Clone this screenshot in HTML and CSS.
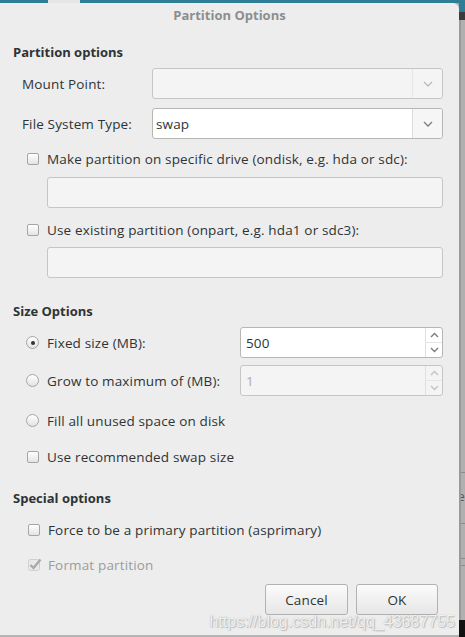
FILE: index.html
```html
<!DOCTYPE html>
<html>
<head>
<meta charset="utf-8">
<link rel="stylesheet" href="styles.css">
</head>
<body>
<div class="screen">
  <div class="main">
    <div class="topstrip"><div class="tab"></div></div>
    <div class="dialog">
      <div class="titlebar">Partition Options</div>
      <div class="content">
        <div class="heading h-first">Partition options</div>

        <div class="field-row r-mount">
          <span class="label">Mount Point:</span>
          <div class="combo disabled">
            <span class="combo-text"></span>
            <span class="combo-btn"><svg width="10" height="6" viewBox="0 0 10 6"><path d="M1 1 L5 5 L9 1" fill="none" stroke="currentColor" stroke-width="1.3"/></svg></span>
          </div>
        </div>

        <div class="field-row r-fs">
          <span class="label">File System Type:</span>
          <div class="combo">
            <span class="combo-text">swap</span>
            <span class="combo-btn"><svg width="10" height="6" viewBox="0 0 10 6"><path d="M1 1 L5 5 L9 1" fill="none" stroke="currentColor" stroke-width="1.3"/></svg></span>
          </div>
        </div>

        <div class="check-row r-c1">
          <span class="checkbox"></span>
          <span class="check-label">Make partition on specific drive (ondisk, e.g. hda or sdc):</span>
        </div>
        <div class="entry disabled r-e1"></div>

        <div class="check-row r-c2">
          <span class="checkbox"></span>
          <span class="check-label">Use existing partition (onpart, e.g. hda1 or sdc3):</span>
        </div>
        <div class="entry disabled r-e2"></div>

        <div class="heading h-size">Size Options</div>

        <div class="field-row r-s1">
          <span class="radio checked"></span>
          <span class="radio-label">Fixed size (MB):</span>
          <div class="spin">
            <span class="spin-text">500</span>
            <span class="spin-btns">
              <span class="spin-btn"><svg width="9" height="6" viewBox="0 0 9 6"><path d="M1 5 L4.5 1.5 L8 5" fill="none" stroke="currentColor" stroke-width="1.4"/></svg></span>
              <span class="spin-btn"><svg width="9" height="6" viewBox="0 0 9 6"><path d="M1 1 L4.5 4.5 L8 1" fill="none" stroke="currentColor" stroke-width="1.4"/></svg></span>
            </span>
          </div>
        </div>

        <div class="field-row r-s2">
          <span class="radio"></span>
          <span class="radio-label">Grow to maximum of (MB):</span>
          <div class="spin disabled">
            <span class="spin-text">1</span>
            <span class="spin-btns">
              <span class="spin-btn"><svg width="9" height="6" viewBox="0 0 9 6"><path d="M1 5 L4.5 1.5 L8 5" fill="none" stroke="currentColor" stroke-width="1.4"/></svg></span>
              <span class="spin-btn"><svg width="9" height="6" viewBox="0 0 9 6"><path d="M1 1 L4.5 4.5 L8 1" fill="none" stroke="currentColor" stroke-width="1.4"/></svg></span>
            </span>
          </div>
        </div>

        <div class="check-row r-s3">
          <span class="radio"></span>
          <span class="check-label">Fill all unused space on disk</span>
        </div>

        <div class="check-row r-s4">
          <span class="checkbox"></span>
          <span class="check-label">Use recommended swap size</span>
        </div>

        <div class="heading h-special">Special options</div>

        <div class="check-row special r-p1">
          <span class="checkbox"></span>
          <span class="check-label">Force to be a primary partition (asprimary)</span>
        </div>

        <div class="check-row special insensitive r-p2">
          <span class="checkmark"><svg width="14" height="13" viewBox="0 0 14 13"><rect x="0.5" y="1.5" width="11" height="11" rx="2" fill="#eaeaea" stroke="#cfcfcf"/><path d="M2.5 7 L5.5 10 L12.5 1.5" fill="none" stroke="currentColor" stroke-width="2.4"/></svg></span>
          <span class="check-label">Format partition</span>
        </div>

        <div class="buttons">
          <button class="btn">Cancel</button>
          <button class="btn">OK</button>
        </div>
      </div>
      <div class="watermark">https://blog.csdn.net/qq_43687755</div>
    </div>
    <div class="bottomline"></div>
  </div>
  <div class="side">
    <div class="side-teal"></div>
    <div class="side-dark"></div>
    <div class="side-gray">
      <div class="side-line l1"></div>
      <div class="side-e">e</div>
      <div class="side-line l2"></div>
      <div class="side-line l3"></div>
      <div class="side-line l4"></div>
    </div>
    <div class="side-black"></div>
  </div>
</div>
</body>
</html>
```
FILE: styles.css
```css
html, body {
  margin: 0;
  padding: 0;
}
body {
  width: 465px;
  height: 637px;
  overflow: hidden;
  background: #a9a9a9;
  font-family: "Open Sans", "DejaVu Sans", sans-serif;
  font-size: 13.5px;
  letter-spacing: 0.15px;
  color: #2e3436;
}
.screen {
  display: flex;
  width: 465px;
  height: 637px;
}
.main {
  width: 459px;
  display: flex;
  flex-direction: column;
}
.topstrip {
  height: 3px;
  background: #2f7e96;
  display: flex;
}
.tab {
  margin-left: 48px;
  width: 32px;
  height: 3px;
  background: #e6e6e6;
}
.dialog {
  position: relative;
  height: 632px;
  background: #ededed;
  border-top-right-radius: 6px;
  display: flex;
  flex-direction: column;
}
.bottomline {
  height: 2px;
  background: #b4b4b4;
}
.titlebar {
  height: 24px;
  display: flex;
  align-items: center;
  justify-content: center;
  color: #8b8e8f;
  font-weight: bold;
  font-size: 13px;
  letter-spacing: 0;
}
.content {
  display: flex;
  flex-direction: column;
  padding: 0 16px 0 13px;
}
.heading {
  height: 24px;
  display: flex;
  align-items: center;
  font-weight: bold;
  font-size: 13px;
  letter-spacing: 0;
}
.h-first { margin-top: 13px; }
.h-size { margin-top: 21px; }
.h-special { margin-top: 19px; }

.field-row {
  display: flex;
  align-items: center;
  height: 31px;
  padding-left: 9px;
}
.r-mount { margin-top: 4px; }
.r-fs { margin-top: 9px; }
.r-s1 { margin-top: 4px; padding-left: 13px; }
.r-s2 { margin-top: 7px; padding-left: 13px; }

.label {
  width: 130px;
  flex: none;
}
.combo {
  flex: 1;
  height: 31px;
  box-sizing: border-box;
  border: 1px solid #b6b6b3;
  border-radius: 3px;
  background: #ffffff;
  display: flex;
  align-items: center;
}
.combo.disabled {
  background: #f4f4f4;
  border-color: #c6c6c4;
}
.combo-text {
  flex: 1;
  padding-left: 3px;
}
.combo-btn {
  width: 29px;
  height: 100%;
  border-left: 1px solid #dcdcdc;
  display: flex;
  align-items: center;
  justify-content: center;
  color: #7b7e7f;
  background: #f6f6f6;
  border-radius: 0 3px 3px 0;
}
.combo.disabled .combo-btn {
  color: #b8baba;
  border-left-color: #e6e6e6;
  background: #f4f4f4;
}

.check-row {
  display: flex;
  align-items: center;
  height: 21px;
  padding-left: 14px;
  gap: 8px;
}
.check-row.special { padding-left: 15px; }
.r-c1 { margin-top: 9px; }
.r-c2 { margin-top: 11px; }
.r-s3 { margin-top: 14px; padding-left: 13px; }
.r-s4 { margin-top: 15px; }
.r-p1 { margin-top: 9px; }
.r-p2 { margin-top: 14px; gap: 6px; }

.checkbox {
  width: 12px;
  height: 12px;
  box-sizing: border-box;
  border: 1px solid #a4a6a6;
  border-radius: 2px;
  background: linear-gradient(#ffffff, #e4e4e4);
  flex: none;
}
.checkmark {
  width: 14px;
  height: 13px;
  color: #a8aaaa;
  display: flex;
  flex: none;
}
.insensitive .check-label {
  color: #9a9c9c;
}
.radio {
  width: 13px;
  height: 13px;
  box-sizing: border-box;
  border: 1px solid #a4a6a6;
  border-radius: 50%;
  background: linear-gradient(#ffffff, #e2e2e2);
  flex: none;
  display: flex;
  align-items: center;
  justify-content: center;
}
.radio.checked::after {
  content: "";
  width: 4px;
  height: 4px;
  border-radius: 50%;
  background: #2e3436;
}
.radio-label {
  margin-left: 8px;
  width: 193px;
  flex: none;
}

.entry {
  height: 31px;
  box-sizing: border-box;
  margin-left: 34px;
  border: 1px solid #c6c6c4;
  border-radius: 3px;
  background: #f4f4f4;
}
.r-e1 { margin-top: 8px; }
.r-e2 { margin-top: 7px; }

.spin {
  flex: 1;
  height: 31px;
  box-sizing: border-box;
  border: 1px solid #b6b6b3;
  border-radius: 3px;
  background: #ffffff;
  display: flex;
}
.spin.disabled {
  background: #f4f4f4;
  border-color: #c6c6c4;
  color: #a9abab;
}
.spin-text {
  flex: 1;
  display: flex;
  align-items: center;
  padding-left: 5px;
}
.spin-btns {
  width: 16px;
  border-left: 1px solid #e0e0e0;
  display: flex;
  flex-direction: column;
}
.spin-btn {
  flex: 1;
  display: flex;
  align-items: center;
  justify-content: center;
  color: #7b7e7f;
}
.spin-btn + .spin-btn {
  border-top: 1px solid #e6e6e6;
}
.spin.disabled .spin-btn {
  color: #c2c4c4;
}

.buttons {
  display: flex;
  justify-content: flex-end;
  gap: 8px;
  margin-top: 9px;
  padding-right: 5px;
}
.btn {
  height: 31px;
  box-sizing: border-box;
  border: 1px solid #b2b2b2;
  border-radius: 3px;
  background: linear-gradient(#fbfbfb, #e6e6e6);
  font-family: inherit;
  font-size: 13.5px;
  letter-spacing: 0.15px;
  color: #2e3436;
  padding: 0;
}
.btn:first-child { width: 83px; }
.btn:last-child { width: 82px; }

.watermark {
  position: absolute;
  right: 4px;
  bottom: 4px;
  font-family: "Liberation Sans", Arial, sans-serif;
  font-size: 16px;
  color: rgba(255, 255, 255, 0.85);
  text-shadow: 0 0 1px rgba(120, 120, 120, 0.6), 1px 1px 1px rgba(150, 150, 150, 0.5);
  letter-spacing: 0;
}

.side {
  width: 6px;
  display: flex;
  flex-direction: column;
}
.side-teal {
  height: 12px;
  background: #2f7e96;
}
.side-dark {
  height: 8px;
  background: #3b3b3b;
}
.side-gray {
  flex: 1;
  background: #b0b0b0;
  border-left: 2px solid #9a9a9a;
  display: flex;
  flex-direction: column;
  overflow: hidden;
}
.side-line {
  height: 1px;
  background: #8c8c8c;
}
.l1 { margin-top: 452px; }
.side-e {
  margin-top: 18px;
  font-size: 12px;
  line-height: 12px;
  color: #555;
  margin-left: -3px;
}
.l2 { margin-top: 20px; }
.l3 { margin-top: 34px; }
.l4 { margin-top: 6px; }
.side-black {
  height: 17px;
  background: #111;
}
```
